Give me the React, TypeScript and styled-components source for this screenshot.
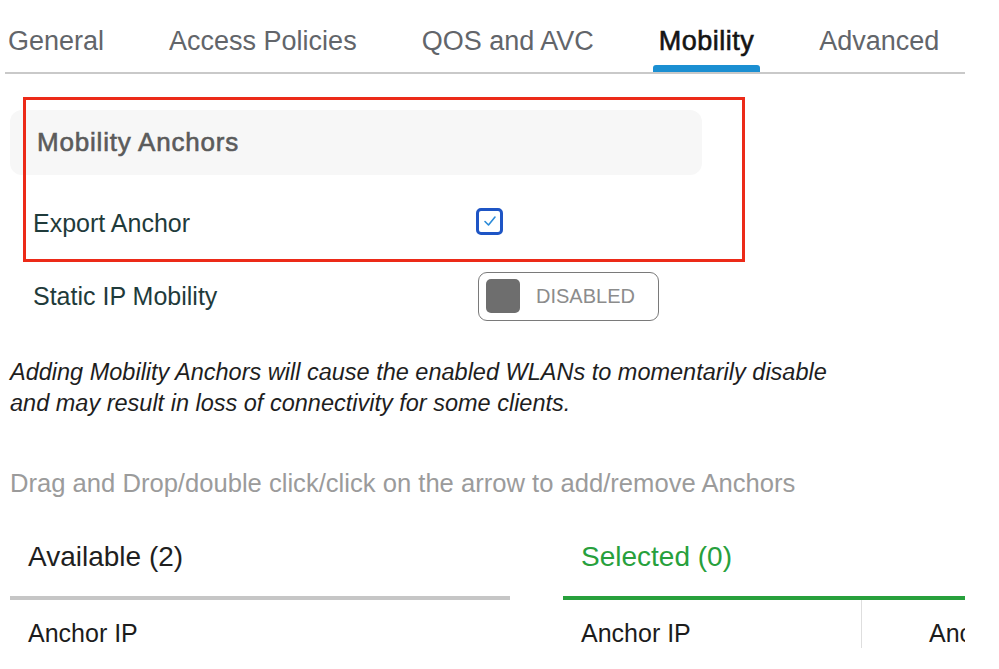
import React from 'react';
import styled, { createGlobalStyle } from 'styled-components';

const GlobalStyle = createGlobalStyle`
  html, body {
    margin: 0;
    padding: 0;
    background: #ffffff;
    font-family: "Liberation Sans", Arial, sans-serif;
  }
`;

const Page = styled.div`
  width: 999px;
  height: 669px;
  overflow: hidden;
  padding-left: 5px;
  box-sizing: border-box;
`;

const TabBar = styled.div`
  display: flex;
  gap: 53px;
  width: 960px;
  height: 72px;
  border-bottom: 2px solid #c9c9c9;
`;

const Tab = styled.div<{ active?: boolean }>`
  position: relative;
  padding: 26px 6px 0;
  font-size: 27px;
  line-height: 30px;
  color: ${(p) => (p.active ? '#141414' : '#62656a')};
  -webkit-text-stroke: ${(p) => (p.active ? '0.6px #141414' : '0')};
  letter-spacing: ${(p) => (p.active ? '0.5px' : '0')};
  white-space: nowrap;
  &:first-child {
    padding-left: 3px;
  }
  &::after {
    content: '';
    display: ${(p) => (p.active ? 'block' : 'none')};
    position: absolute;
    left: 0;
    right: 0;
    bottom: 0;
    height: 7px;
    border-radius: 3px 3px 0 0;
    background: #1b8fd2;
  }
`;

const Section = styled.div`
  position: relative;
  padding: 36px 0 0 5px;
`;

const Highlight = styled.div`
  position: absolute;
  left: 18px;
  top: 23px;
  width: 716px;
  height: 159px;
  border: 3px solid #ec2a18;
  pointer-events: none;
`;

const SectionHeader = styled.div`
  width: 665px;
  height: 65px;
  padding-left: 27px;
  display: flex;
  align-items: center;
  background: #f7f7f7;
  border-radius: 12px;
  font-size: 26px;
  letter-spacing: 0.8px;
  color: #5b5b5b;
  -webkit-text-stroke: 0.6px #5b5b5b;
`;

const Row = styled.div<{ height: number }>`
  display: flex;
  align-items: center;
  height: ${(p) => p.height}px;
  padding-left: 23px;
`;

const Label = styled.div`
  width: 443px;
  font-size: 25px;
  color: #1f3b3b;
`;

const Checkbox = styled.div`
  width: 21px;
  height: 21px;
  margin-top: -4px;
  border: 3px solid #1e55c5;
  border-radius: 5px;
  display: flex;
  align-items: center;
  justify-content: center;
`;

const Toggle = styled.div`
  margin-left: 2px;
  width: 181px;
  height: 49px;
  box-sizing: border-box;
  border: 1.5px solid #7a7a7a;
  border-radius: 9px;
  display: flex;
  align-items: center;
  padding-left: 7px;
  gap: 16px;
`;

const Knob = styled.div`
  width: 34px;
  height: 34px;
  border-radius: 5px;
  background: #6e6e6e;
`;

const ToggleText = styled.span`
  font-size: 20px;
  color: #8c8c8c;
`;

const Note = styled.p`
  margin: 36px 0 0 5px;
  font-size: 23.5px;
  line-height: 31px;
  font-style: italic;
  color: #1e1e1e;
`;

const Hint = styled.p`
  margin: 50px 0 0 5px;
  font-size: 25.6px;
  color: #9b9b9b;
`;

const Lists = styled.div`
  display: flex;
  gap: 53px;
  margin: 20px 0 0 5px;
`;

const ListColumn = styled.div<{ width: number }>`
  width: ${(p) => p.width}px;
  overflow: hidden;
`;

const ListTitle = styled.div<{ accent: string; color: string }>`
  height: 78px;
  padding-left: 18px;
  display: flex;
  align-items: center;
  font-size: 28px;
  color: ${(p) => p.color};
  border-bottom: 4px solid ${(p) => p.accent};
`;

const ListHead = styled.div`
  display: flex;
  height: 48px;
`;

const HeadCell = styled.div<{ width?: number; divider?: boolean }>`
  flex: ${(p) => (p.width ? `0 0 ${p.width}px` : '1 1 auto')};
  padding: 18px 0 0 ${(p) => (p.divider ? '67px' : '18px')};
  font-size: 25px;
  line-height: 30px;
  color: #1c1c1c;
  white-space: nowrap;
  box-sizing: border-box;
  border-left: ${(p) => (p.divider ? '1px solid #dedede' : 'none')};
`;

const tabs = ['General', 'Access Policies', 'QOS and AVC', 'Mobility', 'Advanced'];

export default function App() {
  return (
    <Page>
      <GlobalStyle />
      <TabBar>
        {tabs.map((t) => (
          <Tab key={t} active={t === 'Mobility'}>{t}</Tab>
        ))}
      </TabBar>

      <Section>
        <SectionHeader>Mobility Anchors</SectionHeader>
        <Row height={96}>
          <Label>Export Anchor</Label>
          <Checkbox>
            <svg width="14" height="12" viewBox="0 0 14 12">
              <path d="M2 6.5 L5.5 10 L12 2" fill="none" stroke="#2a8ad8" strokeWidth="1.6" strokeLinecap="round" strokeLinejoin="round" />
            </svg>
          </Checkbox>
        </Row>
        <Row height={50}>
          <Label>Static IP Mobility</Label>
          <Toggle>
            <Knob />
            <ToggleText>DISABLED</ToggleText>
          </Toggle>
        </Row>
        <Highlight />
      </Section>

      <Note>
        Adding Mobility Anchors will cause the enabled WLANs to momentarily disable
        <br />
        and may result in loss of connectivity for some clients.
      </Note>

      <Hint>Drag and Drop/double click/click on the arrow to add/remove Anchors</Hint>

      <Lists>
        <ListColumn width={500}>
          <ListTitle accent="#c6c6c6" color="#1f1f1f">Available (2)</ListTitle>
          <ListHead>
            <HeadCell>Anchor IP</HeadCell>
          </ListHead>
        </ListColumn>
        <ListColumn width={402}>
          <ListTitle accent="#27a03c" color="#27a03c">Selected (0)</ListTitle>
          <ListHead>
            <HeadCell width={298}>Anchor IP</HeadCell>
            <HeadCell divider>Anchor Priority</HeadCell>
          </ListHead>
        </ListColumn>
      </Lists>
    </Page>
  );
}
